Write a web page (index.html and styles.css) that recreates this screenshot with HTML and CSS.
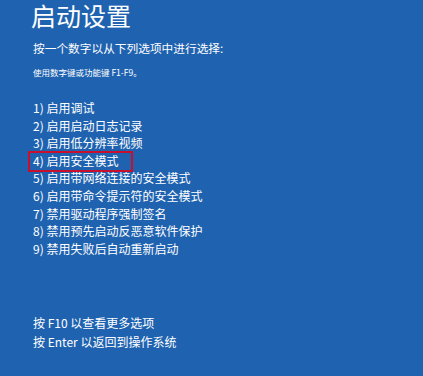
FILE: index.html
```html
<!DOCTYPE html>
<html lang="zh-CN">
<head>
<meta charset="utf-8">
<link rel="stylesheet" href="styles.css">
</head>
<body>
<div class="screen">
  <h1 class="title">启动设置</h1>
  <p class="lead">按一个数字以从下列选项中进行选择:</p>
  <p class="hint">使用数字键或功能键 F1-F9。</p>
  <ol class="options">
    <li>1) 启用调试</li>
    <li>2) 启用启动日志记录</li>
    <li>3) 启用低分辨率视频</li>
    <li class="selected">4) 启用安全模式</li>
    <li>5) 启用带网络连接的安全模式</li>
    <li>6) 启用带命令提示符的安全模式</li>
    <li>7) 禁用驱动程序强制签名</li>
    <li>8) 禁用预先启动反恶意软件保护</li>
    <li>9) 禁用失败后自动重新启动</li>
  </ol>
  <div class="footer">
    <p>按 F10 以查看更多选项</p>
    <p>按 Enter 以返回到操作系统</p>
  </div>
</div>
</body>
</html>
```
FILE: styles.css
```css
html, body {
  margin: 0;
  padding: 0;
  background: #1f63b0;
}
.screen {
  width: 423px;
  height: 376px;
  box-sizing: border-box;
  padding: 0 0 0 33px;
  color: #ffffff;
  font-family: "Noto Sans CJK SC", "Noto Sans", sans-serif;
  display: flex;
  flex-direction: column;
}
.title {
  margin: 2px 0 0 -2px;
  font-family: "Liberation Sans", "Noto Sans CJK SC", sans-serif;
  font-size: 25px;
  font-weight: 400;
  line-height: 30px;
}
.lead {
  margin: 8px 0 0;
  font-size: 11.7px;
  line-height: 16px;
}
.hint {
  margin: 10px 0 0;
  font-size: 8.5px;
  line-height: 12px;
}
.options {
  list-style: none;
  margin: 21px 0 0;
  padding: 0;
  font-size: 12px;
  line-height: 17.6px;
}
.options li {
  position: relative;
}
.options li.selected::after {
  content: "";
  position: absolute;
  left: -5px;
  top: -1px;
  width: 101px;
  height: 17px;
  border: 2px solid #c8102e;
}
.footer {
  margin-top: 57px;
  font-size: 12px;
  line-height: 18.5px;
}
.footer p {
  margin: 0;
}
```
